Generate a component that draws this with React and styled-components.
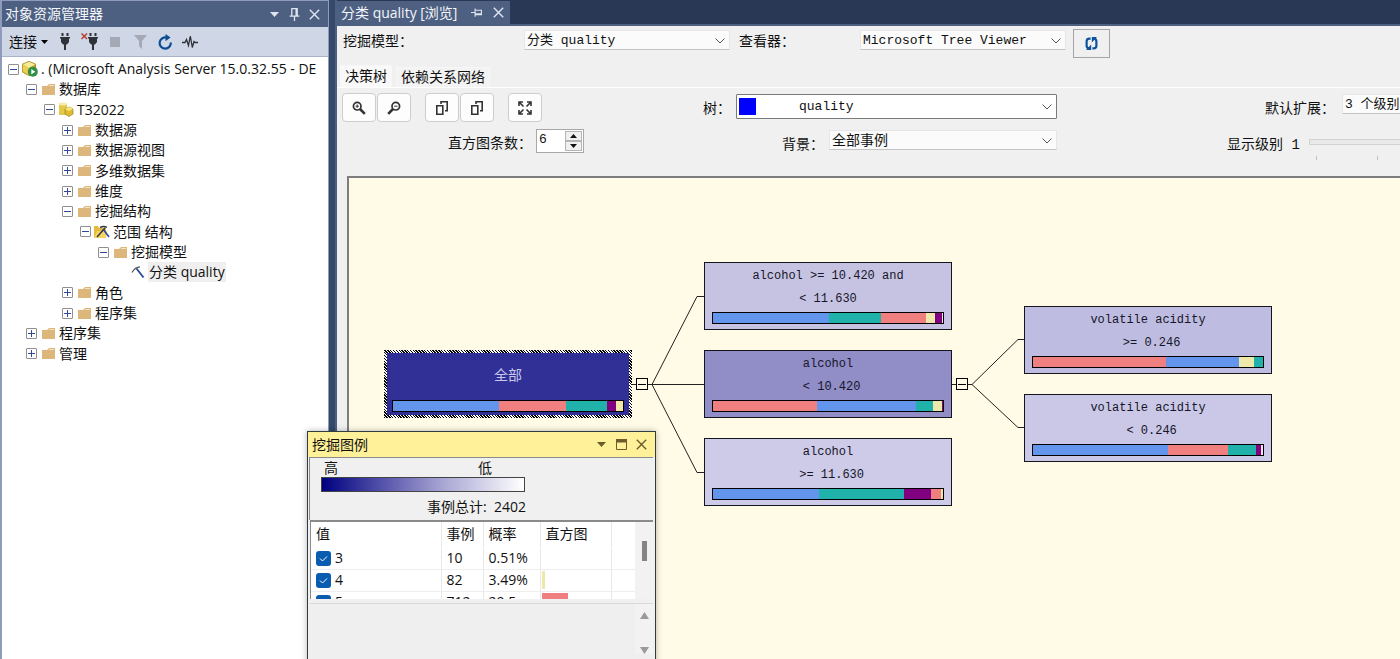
import React from "react";
import styled, { createGlobalStyle } from "styled-components";

const UI = `"Open Sans", "Noto Sans CJK SC", sans-serif`;
const MONO = `"Liberation Mono", "Noto Sans CJK SC", monospace`;

const Global = createGlobalStyle`
  *, *::before, *::after { box-sizing: border-box; }
  body { margin: 0; font: 14px/20px ${UI}; color: #111; background: #293955; }
  button, input, select { font: inherit; color: inherit; margin: 0; padding: 0; }
  button { border: 0; background: none; display: flex; align-items: center; justify-content: center; }
  svg { display: block; flex: none; }
  ul { list-style: none; margin: 0; padding: 0; }
`;

/* ---------- shell ---------- */

const Shell = styled.div`
  position: relative;
  display: flex;
  height: 100vh;
  overflow: hidden;
  background: #35496a;
`;

const Explorer = styled.aside`
  display: flex;
  flex-direction: column;
  flex: 0 0 329px;
  border: solid #8e9bbc;
  border-width: 1px 1px 0 2px;
  background: #fff;
  overflow: hidden;
`;

const ExplorerTitle = styled.header`
  display: flex;
  align-items: center;
  flex: none;
  height: 26px;
  gap: 4px;
  padding: 0 6px 0 3px;
  color: #f4f6fa;
  background: #4d6082;
  white-space: nowrap;
  h2 { flex: 1; margin: 0; font-size: 14px; font-weight: 400; }
`;

const TitleButton = styled.button`
  width: 16px;
  height: 16px;
  color: ${(p) => p.$color || "#dfe4ee"};
`;

const ExplorerTools = styled.div`
  display: flex;
  align-items: center;
  flex: none;
  height: 30px;
  gap: 9px;
  padding: 0 7px;
  background: #cfd6e5;
  border-bottom: 1px solid #a9b3c9;
`;

const ToolButton = styled.button`
  width: ${(p) => (p.$wide ? "auto" : "16px")};
  height: 20px;
  gap: 4px;
  white-space: nowrap;
`;

/* ---------- object tree ---------- */

const Tree = styled.ul`
  display: grid;
  grid-auto-rows: 1fr;
  height: 305px;
  margin-top: 2px;
`;

const TreeRow = styled.li`
  display: flex;
  align-items: center;
  padding-left: ${(p) => 6 + p.$depth * 18}px;
  white-space: nowrap;
`;

const Expander = styled.button`
  flex: none;
  width: 11px;
  height: 11px;
  margin-right: 3px;
  border: ${(p) => (p.$leaf ? "0" : "1px solid #8f8f8f")};
  border-radius: 1px;
  color: #33479a;
`;

const TreeIcon = styled.span`
  display: flex;
  align-items: center;
  justify-content: center;
  flex: none;
  width: 16px;
  margin-right: 2px;
`;

const TreeLabel = styled.span`
  padding: 0 1px;
  background: ${(p) => (p.$selected ? "#efefef" : "transparent")};
`;

/* ---------- document ---------- */

const Document = styled.main`
  display: flex;
  flex-direction: column;
  flex: 1;
  min-width: 0;
  margin-left: 6px;
  border-left: 2px solid #4d6082;
  background: #f0f0f0;
  font: 14px/20px ${MONO};
`;

const DocTabs = styled.div`
  display: flex;
  flex: none;
  height: 26px;
  padding-top: 1px;
  border-bottom: 2px solid #4d6082;
  background: #293955;
  font-family: ${UI};
`;

const DocTab = styled.div`
  display: flex;
  align-items: center;
  gap: 6px;
  padding: 0 4px;
  color: #f4f6fa;
  background: #4d6082;
  white-space: nowrap;
  span { margin-right: 5px; }
`;

const PickerRow = styled.div`
  display: flex;
  align-items: flex-start;
  flex: none;
  height: 40px;
  padding: 3px 6px 0;
  > label { padding-top: 3px; }
  > div { margin-top: 1px; }
`;

const Label = styled.label`
  flex: none;
  width: ${(p) => (p.$width ? p.$width + "px" : "auto")};
  margin-right: ${(p) => p.$after || 0}px;
  white-space: nowrap;
`;

const SelectBox = styled.div`
  display: grid;
  align-items: center;
  flex: none;
  width: ${(p) => p.$width}px;
  height: ${(p) => (p.$framed ? 25 : 20)}px;
  margin-right: ${(p) => p.$after || 0}px;
  border: 1px solid ${(p) => (p.$framed ? "#7a7a7a" : "#e6e6e6")};
  border-bottom-color: ${(p) => (p.$framed ? "#7a7a7a" : "#c4c4c4")};
  border-radius: 1px;
  background: ${(p) => (p.$framed ? "#fff" : "#fbfbfb")};
  > * { grid-area: 1 / 1; }
  > svg { justify-self: end; margin-right: 4px; pointer-events: none; }
  > select {
    width: 100%;
    padding-top: 1px;
    padding-left: ${(p) => (p.$framed ? 62 : 2)}px;
    border: 0;
    appearance: none;
    background: transparent;
    font-size: ${(p) => (p.$large ? 14 : 13)}px;
    line-height: 18px;
    outline: 0;
  }
`;

const Swatch = styled.span`
  width: 17px;
  height: 17px;
  margin-left: 2px;
  background: #00f;
`;

const RefreshButton = styled.button`
  width: 37px;
  height: 29px;
  border: 1px solid #a5a5a5;
`;

const ViewTabs = styled.div`
  display: flex;
  align-items: flex-end;
  flex: none;
  height: 22px;
  padding-left: 3px;
  border-bottom: 1px solid #fff;
`;

const ViewTab = styled.button`
  height: ${(p) => (p.$active ? 22 : 20)}px;
  padding: 0 4px;
  margin-right: 4px;
  border: 1px solid #f7f7f7;
  border-bottom: 0;
  background: ${(p) => (p.$active ? "#f9f9f9" : "#f3f3f3")};
  white-space: nowrap;
`;

const Controls = styled.div`
  display: grid;
  grid-template-columns: 248px 467px auto;
  grid-template-rows: 36px 24px;
  flex: none;
  padding: 5px 0 23px 5px;
  overflow: hidden;
`;

const Cell = styled.div`
  display: flex;
  align-items: flex-start;
  justify-content: ${(p) => (p.$end ? "flex-end" : "flex-start")};
  padding-left: ${(p) => p.$indent || 0}px;
  padding-top: ${(p) => (p.$flush ? 0 : 1)}px;
  > label { padding-top: 5px; }
`;

const SquareButton = styled.button`
  flex: none;
  width: 34px;
  height: 29px;
  margin-right: ${(p) => (p.$gapAfter ? 14 : 1)}px;
  border: 1px solid #cdcdcd;
  border-radius: 4px;
  background: #fdfdfd;
  color: #333;
`;

const Spinner = styled.div`
  display: grid;
  grid-template-columns: 1fr 17px;
  grid-template-rows: 1fr 1fr;
  width: 48px;
  height: 24px;
  padding: 1px;
  border: 1px solid #a8a8a8;
  background: #fff;
  input {
    grid-row: 1 / 3;
    width: 100%;
    padding: 0 1px 3px;
    border: 0;
    outline: 0;
    appearance: textfield;
    font-size: 13px;
    background: transparent;
  }
  input::-webkit-inner-spin-button { display: none; }
  button { border: 1px solid #b5b5b5; background: #f0f0f0; }
`;

const Slider = styled.div`
  flex: none;
  width: 260px;
  padding-top: 9px;
  input {
    display: block;
    width: 100%;
    height: 6px;
    appearance: none;
    background: #e9e9e9;
    border: 1px solid #d2d2d2;
  }
  input::-webkit-slider-thumb { appearance: none; width: 1px; height: 4px; background: transparent; }
`;

const Ticks = styled.div`
  display: flex;
  justify-content: space-between;
  padding: 11px 7px 0;
  i { width: 1px; height: 4px; background: #c0c0c0; }
`;

/* ---------- decision tree canvas ---------- */

const Canvas = styled.section`
  position: relative;
  flex: 1;
  min-height: 0;
  margin-left: 10px;
  border: solid #7d7d7d;
  border-width: 2px 0 0 2px;
  background: #fffbe6;
  overflow: hidden;
  font-size: 12px;
  line-height: 23px;
`;

const Links = styled.svg`
  position: absolute;
  left: 0;
  top: 0;
`;

const Node = styled.div`
  position: absolute;
  left: ${(p) => p.$x}px;
  top: ${(p) => p.$y}px;
  display: flex;
  flex-direction: column;
  width: 248px;
  height: 68px;
  padding: 0 7px 5px;
  border: 1px solid #15151f;
  background: ${(p) => p.$fill};
  color: #16162a;
  text-align: center;
  white-space: pre;
`;

const RootNode = styled(Node)`
  padding: 0 5px 3px;
  border: 3px solid transparent;
  background:
    linear-gradient(#303096, #303096) padding-box,
    repeating-linear-gradient(45deg, #000 0 1px, #fff 1px 2px) border-box;
  color: #c9c9ec;
  font-size: 14px;
`;

const NodeText = styled.div`
  display: flex;
  flex-direction: column;
  justify-content: center;
  flex: 1;
`;

const Bar = styled.div`
  display: flex;
  flex: none;
  height: 12px;
  border: 1px solid #000;
`;

const Segment = styled.span`
  flex: ${(p) => p.$share} 0 0;
  background: ${(p) => p.$color};
`;

const Toggle = styled.button`
  position: absolute;
  left: ${(p) => p.$x}px;
  top: ${(p) => p.$y}px;
  width: 12px;
  height: 12px;
  border: 1px solid #000;
  background: #fffbe6;
`;

/* ---------- legend window ---------- */

const Legend = styled.section`
  position: absolute;
  left: 307px;
  top: 431px;
  width: 349px;
  height: 260px;
  display: flex;
  flex-direction: column;
  border: 1px solid #2f3d3f;
  background: #f0f0f0;
  box-shadow: 0 0 6px rgba(0, 0, 0, 0.3);
`;

const LegendTitle = styled.header`
  display: flex;
  align-items: center;
  flex: none;
  height: 25px;
  gap: 4px;
  padding: 0 6px 0 4px;
  background: #fff09a;
  h2 { flex: 1; margin: 0; font-size: 14px; font-weight: 400; }
`;

const Scale = styled.div`
  flex: none;
  height: 63px;
  margin: 0 2px 0 1px;
  padding: 0 11px;
  border: solid #8a8a8a;
  border-width: 1px 0 0 1px;
`;

const ScaleEnds = styled.div`
  display: flex;
  justify-content: space-between;
  width: 168px;
  height: 19px;
  margin-left: 3px;
`;

const Gradient = styled.div`
  width: 204px;
  height: 15px;
  border: 1px solid #444;
  background: linear-gradient(90deg, #000080, #a9a6d4 60%, #fff);
`;

const Total = styled.div`
  padding: 5px 0 0 106px;
  white-space: pre;
`;

const TableArea = styled.div`
  display: flex;
  flex: none;
  height: 79px;
  margin: 0 2px;
  border: solid #8a8a8a;
  border-width: 2px 0 0 1px;
  background: #fff;
  overflow: hidden;
`;

const Values = styled.table`
  flex: 1;
  align-self: flex-start;
  table-layout: fixed;
  border-collapse: collapse;
  line-height: 20px;
  th, td {
    height: 22px;
    padding: 0 0 0 5px;
    border-right: 1px solid #e8e8e8;
    border-bottom: 1px solid #eee;
    font-weight: 400;
    text-align: left;
    white-space: nowrap;
    overflow: hidden;
  }
  th { height: 25px; border-bottom-color: #fff; }
  th:last-child, td:last-child { border-right: 0; }
  td.bar { padding: 1px 0 1px 1px; }
`;

const Check = styled.label`
  display: grid;
  grid-template-columns: 15px auto;
  align-items: center;
  justify-content: start;
  gap: 4px;
  > * { grid-row: 1; }
  input, svg { grid-column: 1; }
  svg { pointer-events: none; }
  input {
    appearance: none;
    width: 15px;
    height: 15px;
    border-radius: 3px;
    background: #0a5cb0;
  }
`;

const HistBar = styled.span`
  display: block;
  width: ${(p) => p.$width}px;
  height: 18px;
  background: ${(p) => p.$color};
`;

const ScrollTrack = styled.div`
  display: flex;
  flex-direction: column;
  align-items: center;
  justify-content: ${(p) => (p.$arrows ? "space-between" : "flex-start")};
  flex: none;
  width: 18px;
  height: ${(p) => (p.$arrows ? "50px" : "auto")};
  padding-top: ${(p) => (p.$arrows ? 8 : 19)}px;
  background: #f2f2f2;
  > i { width: 5px; height: 20px; background: #858585; }
`;

const DetailArea = styled.div`
  display: flex;
  justify-content: flex-end;
  flex: 1;
  margin: 4px 2px 0;
  border-top: 1px solid #d9d9d9;
  background: #efefef;
`;

/* ---------- icons ---------- */

const Chevron = () => (
  <svg width="10" height="6" viewBox="0 0 10 6" fill="none" stroke="#555"><path d="M.5.5 5 5 9.5.5" /></svg>
);
const Caret = () => (
  <svg width="9" height="5" viewBox="0 0 9 5" fill="currentColor"><path d="M0 0h9L4.500 5z" /></svg>
);
const Cross = () => (
  <svg width="11" height="11" viewBox="0 0 11 11" stroke="currentColor" strokeWidth="1.4"><path d="m.8.8 9.400 9.400M10.200.8.8 10.200" /></svg>
);
const Pin = ({ side }) => (
  <svg width={side ? 11 : 13} height={side ? 11 : 13} viewBox="0 0 12 12" fill="none" stroke="currentColor" strokeWidth="1.2">
    <g transform={side ? "rotate(90 6 6)" : undefined}>
      <path d="M3.500 7V.6h5V7M1.500 7.500h9M6 8v4M7.500 1v6" />
    </g>
  </svg>
);
const Plug = ({ off }) => (
  <svg width={off ? 18 : 12} height="17" viewBox={off ? "-6 0 18 17" : "0 0 12 17"} fill="#2f3238">
    <path d="M2.500 0h2v3h-2zM7.500 0h2v3h-2zM1 4h10v1.500h-1V9L8 11.500H7V17H5v-5.500H4L2 9V5.500H1z" />
    {off && <path d="m-5.500.5 5.500 5.500m0-5.500-5.500 5.500" stroke="#b8402f" strokeWidth="1.500" />}
  </svg>
);
const Stop = () => (<svg width="10" height="10"><path d="M0 0h10v10H0z" fill="#a4a9b5" /></svg>);
const Funnel = () => (<svg width="13" height="14" viewBox="0 0 13 14"><path d="M0 0h13L8 6v8l-3-3V6z" fill="#a4a9b5" /></svg>);
const Reload = () => (
  <svg width="15" height="16" viewBox="0 0 15 16" fill="none" stroke="#0c4c94" strokeWidth="2.200">
    <path d="M12.800 8.500A5.600 5.600 0 1 1 9 3.700" /><path d="M7.500 0v7.200L12.500 3.600z" fill="#0c4c94" stroke="none" />
  </svg>
);
const Pulse = () => (
  <svg width="16" height="14" viewBox="0 0 16 14" fill="none" stroke="#2f3238" strokeWidth="1.300">
    <path d="M0 7.500h3l1.500-3 2 6 1.800-9.500 2 11.500 1.700-6 1 1H16" />
  </svg>
);
const Sign = ({ open }) => (
  <svg width="7" height="7" viewBox="0 0 7 7" stroke="currentColor"><path d={open ? "M0 3.500h7" : "M0 3.500h7M3.500 0v7"} /></svg>
);
const Folder = () => (
  <svg width="13" height="11" viewBox="0 0 13 11">
    <path d="M0 2h5l2-2h6v11H0z" fill="#dcb67a" /><path d="M7 1.500h5" stroke="#f3e2c4" />
  </svg>
);
const ServerIcon = () => (
  <svg width="16" height="16" viewBox="0 0 16 16">
    <path d="M7 0 14 3v8l-7 4-7-4V3z" fill="#c4a12c" /><path d="m7 0 7 3-7 4-7-4z" fill="#f7ec9c" /><path d="M0 3l7 4v8l-7-4z" fill="#e9cf52" />
    <path d="M7 .4 13.600 3.200v7.500L7 14.500.4 10.700V3.200z" fill="none" stroke="#9c8222" strokeWidth=".7" />
    <circle cx="10.800" cy="10.800" r="5" fill="#2f8f45" /><path d="M9.300 8v5.600l4-2.800z" fill="#fff" />
  </svg>
);
const CubeIcon = () => (
  <svg width="16" height="15" viewBox="0 0 16 15">
    <path d="M1 1.500h8V13H1z" fill="#e3c84a" /><path d="M1 2c0-2 8-2 8 0s-8 2-8 0" fill="#f7ebac" />
    <path d="m11 5 4 2v5l-4 2.500L7 12V7z" fill="#e0bd30" stroke="#9b8020" strokeWidth=".7" /><path d="m11 5 4 2-4 2-4-2z" fill="#f8e778" />
  </svg>
);
const StructIcon = () => (
  <svg width="16" height="14" viewBox="0 0 16 14" fill="none">
    <path d="M0 1h4l1 2h7v10H0z" fill="#e5bb3d" /><path d="M0 13 3 6h10l-1 7z" fill="#f2d468" />
    <path d="M6 2.500q4-2 7 0M3 12l8-9" stroke="#333" strokeWidth="1.400" /><path d="m9 4 6 8" stroke="#25459c" strokeWidth="1.600" />
  </svg>
);
const ModelIcon = () => (
  <svg width="14" height="13" viewBox="0 0 14 13" fill="none">
    <path d="M1 6.500Q4 1 9 .8" stroke="#555" strokeWidth="1.200" /><path d="m5.500 2.500 7 9" stroke="#25459c" strokeWidth="1.800" />
  </svg>
);
const Zoom = ({ out }) => (
  <svg width="14" height="14" viewBox="0 0 14 14" fill="none" stroke="currentColor">
    <g transform={out ? "translate(14 0) scale(-1 1)" : undefined}>
      <circle cx="5.200" cy="5.200" r="3.800" strokeWidth="1.700" /><path d="m8 8 4.800 4.800" strokeWidth="2.600" />
      <path d={out ? "M3.500 5.200h3.400" : "M3.500 5.200h3.400M5.200 3.500v3.400"} />
    </g>
  </svg>
);
const Copy = () => (
  <svg width="12" height="14" viewBox="0 0 12 14" fill="none" stroke="currentColor" strokeWidth="1.600">
    <path d="M.8 4.800h6v8.400h-6zM5 3V.8h6.200v9H9" />
  </svg>
);
const Fit = () => (
  <svg width="14" height="14" viewBox="0 0 14 14" fill="none" stroke="currentColor" strokeWidth="1.600">
    <path d="M1 5V1h4M9 1h4v4M13 9v4H9M5 13H1V9M1 1l4.500 4.500M13 1 8.500 5.500M13 13 8.500 8.500M1 13l4.500-4.500" />
  </svg>
);
const Cycle = () => (
  <svg width="13" height="13" viewBox="0 0 12 12" fill="none" stroke="#0c539b" strokeWidth="2">
    <path d="M5.200 1.500H4Q1.500 1.500 1.500 4v4q0 2 2 2.500M6.800 10.500H8q2.500 0 2.500-2.500V4q0-2-2-2.500" />
    <path d="M1 12h4.700V7zM11 0H6.300v5z" fill="#0c539b" stroke="none" />
  </svg>
);
const Maximize = () => (
  <svg width="11" height="11" viewBox="0 0 11 11"><path d="M.5 1.500h10v9H.5z" fill="none" stroke="currentColor" /><path d="M0 0h11v3.500H0z" fill="currentColor" /></svg>
);
const Tri = ({ down, big }) => (
  <svg width={big ? 9 : 7} height={big ? 7 : 4} viewBox="0 0 8 4" preserveAspectRatio="none" fill={big ? "#9a9a9a" : "#111"}>
    <path d={down ? "M0 0h8L4 4z" : "M0 4h8L4 0z"} />
  </svg>
);
const Tick = () => (
  <svg width="15" height="15" viewBox="0 0 15 15" fill="none" stroke="#fff"><path d="m4 7.500 2.500 2.500L11 5.500" /></svg>
);

/* ---------- data ---------- */

const BLUE = "#6495ed", RED = "#f08080", TEAL = "#20b2aa", PURPLE = "#800080", KHAKI = "#eee8aa", PALE = "#f0e6f0";

const objects = [
  [0, "open", ServerIcon, ". (Microsoft Analysis Server 15.0.32.55 - DE"],
  [1, "open", Folder, "数据库"],
  [2, "open", CubeIcon, "T32022"],
  [3, "closed", Folder, "数据源"],
  [3, "closed", Folder, "数据源视图"],
  [3, "closed", Folder, "多维数据集"],
  [3, "closed", Folder, "维度"],
  [3, "open", Folder, "挖掘结构"],
  [4, "open", StructIcon, "范围 结构"],
  [5, "open", Folder, "挖掘模型"],
  [6, "leaf", ModelIcon, "分类 quality"],
  [3, "closed", Folder, "角色"],
  [3, "closed", Folder, "程序集"],
  [1, "closed", Folder, "程序集"],
  [1, "closed", Folder, "管理"],
];

const nodes = [
  { x: 355, y: 84, fill: "#c6c3e2", lines: ["alcohol >= 10.420 and", "< 11.630"], bar: [[350, BLUE], [154, TEAL], [138, RED], [27, KHAKI], [19, PURPLE], [4, PALE]] },
  { x: 355, y: 172, fill: "#908dc7", lines: ["alcohol", " < 10.420"], bar: [[313, RED], [297, BLUE], [50, TEAL], [27, KHAKI], [4, PURPLE]] },
  { x: 355, y: 260, fill: "#cdcbe8", lines: ["alcohol", " >= 11.630"], bar: [[318, BLUE], [255, TEAL], [81, PURPLE], [30, RED], [7, KHAKI]] },
  { x: 675, y: 128, fill: "#bfbce1", lines: ["volatile acidity", " >= 0.246"], bar: [[401, RED], [219, BLUE], [45, KHAKI], [26, TEAL]] },
  { x: 675, y: 216, fill: "#cac8e6", lines: ["volatile acidity", " < 0.246"], bar: [[406, BLUE], [181, RED], [83, TEAL], [15, PURPLE], [6, PALE]] },
];

const rootBar = [[318, BLUE], [202, RED], [122, TEAL], [27, PURPLE], [22, KHAKI]];

const values = [
  ["3", "10", "0.51%", 0, "transparent"],
  ["4", "82", "3.49%", 3, KHAKI],
  ["5", "712", "29.5...", 26, RED],
];

const Histogram = ({ parts }) => (
  <Bar>{parts.map(([share, color]) => <Segment key={color} $share={share} $color={color} />)}</Bar>
);

const Picker = ({ id, value, children, ...box }) => (
  <SelectBox {...box}>
    {children}
    <select id={id} defaultValue={value}><option>{value}</option></select>
    <Chevron />
  </SelectBox>
);

function ObjectExplorer() {
  return (
    <Explorer>
      <ExplorerTitle>
        <h2>对象资源管理器</h2>
        <TitleButton aria-label="菜单"><Caret /></TitleButton>
        <TitleButton aria-label="固定"><Pin /></TitleButton>
        <TitleButton aria-label="关闭"><Cross /></TitleButton>
      </ExplorerTitle>
      <ExplorerTools>
        <ToolButton $wide>连接 <svg width="7" height="4" viewBox="0 0 7 4"><path d="M0 0h7L3.500 4z" /></svg></ToolButton>
        <ToolButton aria-label="连接服务器"><Plug /></ToolButton>
        <ToolButton aria-label="断开连接"><Plug off /></ToolButton>
        <ToolButton aria-label="停止"><Stop /></ToolButton>
        <ToolButton aria-label="筛选"><Funnel /></ToolButton>
        <ToolButton aria-label="刷新"><Reload /></ToolButton>
        <ToolButton aria-label="活动"><Pulse /></ToolButton>
      </ExplorerTools>
      <Tree>
        {objects.map(([depth, state, Icon, name], i) => (
          <TreeRow key={i} $depth={depth}>
            <Expander $leaf={state === "leaf"} aria-label={name}>{state !== "leaf" && <Sign open={state === "open"} />}</Expander>
            <TreeIcon><Icon /></TreeIcon>
            <TreeLabel $selected={state === "leaf"}>{name}</TreeLabel>
          </TreeRow>
        ))}
      </Tree>
    </Explorer>
  );
}

function TreeCanvas() {
  return (
    <Canvas>
      <Links width="700" height="340" viewBox="0 0 700 340" fill="none" stroke="#222">
        <path d="M283 206.500h20M303 206.500h52M303 206.500 348 118.500h7M303 206.500 348 294.500h7" />
        <path d="M603 206.500h20M623 206.500 669 161.500h6M623 206.500 669 249.500h6" />
      </Links>
      <RootNode $x={35} $y={172}>
        <NodeText>全部</NodeText>
        <Histogram parts={rootBar} />
      </RootNode>
      {nodes.map((n) => (
        <Node key={n.lines.join()} $x={n.x} $y={n.y} $fill={n.fill}>
          <NodeText>{n.lines.map((l) => <span key={l}>{l}</span>)}</NodeText>
          <Histogram parts={n.bar} />
        </Node>
      ))}
      <Toggle $x={287} $y={200} aria-label="折叠"><svg width="8" height="1"><path d="M0 0h8v1H0z" /></svg></Toggle>
      <Toggle $x={607} $y={200} aria-label="折叠"><svg width="8" height="1"><path d="M0 0h8v1H0z" /></svg></Toggle>
    </Canvas>
  );
}

function MiningLegend() {
  return (
    <Legend>
      <LegendTitle>
        <h2>挖掘图例</h2>
        <TitleButton $color="#6b5c2c" aria-label="菜单"><Caret /></TitleButton>
        <TitleButton $color="#6b5c2c" aria-label="最大化"><Maximize /></TitleButton>
        <TitleButton $color="#6b5c2c" aria-label="关闭"><Cross /></TitleButton>
      </LegendTitle>
      <Scale>
        <ScaleEnds><span>高</span><span>低</span></ScaleEnds>
        <Gradient />
        <Total>{"事例总计:  2402"}</Total>
      </Scale>
      <TableArea>
        <Values>
          <colgroup><col width="130" /><col width="42" /><col width="57" /><col width="71" /><col /></colgroup>
          <thead><tr><th>值</th><th>事例</th><th>概率</th><th>直方图</th><th /></tr></thead>
          <tbody>
            {values.map(([value, cases, chance, width, color]) => (
              <tr key={value}>
                <td><Check><input type="checkbox" defaultChecked /><Tick /><span>{value}</span></Check></td>
                <td>{cases}</td>
                <td>{chance}</td>
                <td className="bar"><HistBar $width={width} $color={color} /></td>
                <td />
              </tr>
            ))}
          </tbody>
        </Values>
        <ScrollTrack><i /></ScrollTrack>
      </TableArea>
      <DetailArea><ScrollTrack $arrows><Tri big /><Tri big down /></ScrollTrack></DetailArea>
    </Legend>
  );
}

export default function App() {
  return (
    <Shell>
      <Global />
      <ObjectExplorer />
      <Document>
        <DocTabs>
          <DocTab>
            <span>分类 quality [浏览]</span>
            <TitleButton aria-label="固定"><Pin side /></TitleButton>
            <TitleButton aria-label="关闭"><Cross /></TitleButton>
          </DocTab>
        </DocTabs>
        <PickerRow>
          <Label htmlFor="model" $width={181}>挖掘模型：</Label>
          <Picker id="model" value="分类 quality" $width={206} $after={9} />
          <Label htmlFor="viewer" $width={121}>查看器：</Label>
          <Picker id="viewer" value="Microsoft Tree Viewer" $width={206} $after={7} />
          <RefreshButton aria-label="刷新"><Cycle /></RefreshButton>
        </PickerRow>
        <ViewTabs>
          <ViewTab $active>决策树</ViewTab>
          <ViewTab>依赖关系网络</ViewTab>
        </ViewTabs>
        <Controls>
          <Cell $flush>
            <SquareButton aria-label="放大"><Zoom /></SquareButton>
            <SquareButton $gapAfter aria-label="缩小"><Zoom out /></SquareButton>
            <SquareButton aria-label="复制"><Copy /></SquareButton>
            <SquareButton $gapAfter aria-label="复制全部"><Copy /></SquareButton>
            <SquareButton aria-label="适应窗口"><Fit /></SquareButton>
          </Cell>
          <Cell $end>
            <Label htmlFor="tree" $after={5}>树：</Label>
            <Picker id="tree" value="quality" $width={321} $framed><Swatch /></Picker>
          </Cell>
          <Cell $indent={208}>
            <Label htmlFor="expand" $width={77}>默认扩展：</Label>
            <Picker id="expand" value="3 个级别" $width={120} />
          </Cell>
          <Cell $indent={106} $flush>
            <Label htmlFor="bars" $after={4}>直方图条数：</Label>
            <Spinner>
              <input id="bars" type="number" defaultValue="6" />
              <button aria-label="增加"><Tri /></button>
              <button aria-label="减少"><Tri down /></button>
            </Spinner>
          </Cell>
          <Cell $end>
            <Label htmlFor="background" $after={5}>背景：</Label>
            <Picker id="background" value="全部事例" $width={228} $large />
          </Cell>
          <Cell $indent={170}>
            <Label htmlFor="level" $width={82}>显示级别 1</Label>
            <Slider>
              <input id="level" type="range" min="1" max="5" defaultValue="1" />
              <Ticks><i /><i /><i /><i /><i /></Ticks>
            </Slider>
          </Cell>
        </Controls>
        <TreeCanvas />
      </Document>
      <MiningLegend />
    </Shell>
  );
}
